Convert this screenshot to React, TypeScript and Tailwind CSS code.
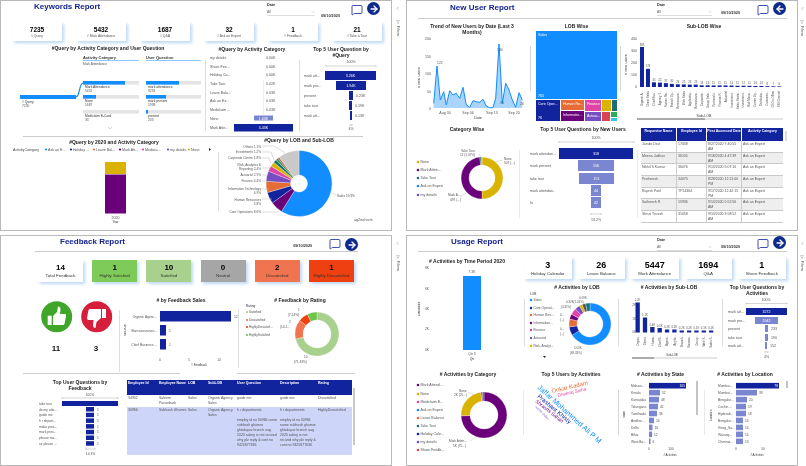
import type { ReactNode } from "react"
import { ArrowLeft, ArrowRight, ChevronDown, ChevronLeft, Filter, MessageSquare } from "lucide-react"

const BLUE = "#118dff"
const NAVY = "#12239e"
const ORANGE = "#e66c37"
const PURPLE = "#6b007b"
const PINK = "#e044a7"
const VIOLET = "#744ec2"
const GOLD = "#d9b300"
const TEAL = "#1a6e78"
const RED = "#d64550"
const SOFT = "#7b86d0"

function T({ x, y, s = 3.6, c = "#555", b = false, a = "start", r, children }: { x: number; y: number; s?: number; c?: string; b?: boolean; a?: "start" | "middle" | "end"; r?: number; children: ReactNode }) {
  return (
    <text x={x} y={y} fontSize={s} fill={c} fontWeight={b ? 700 : 400} textAnchor={a} transform={r !== undefined ? `rotate(${r} ${x} ${y})` : undefined}>
      {children}
    </text>
  )
}

function B({ x, y, x2, y2, c }: { x: number; y: number; x2: number; y2: number; c: string }) {
  return <rect x={x} y={y} width={x2 - x} height={y2 - y} fill={c} />
}

function L({ d, c = "#bbb", w = 0.5 }: { d: string; c?: string; w?: number }) {
  return <path d={d} stroke={c} strokeWidth={w} fill="none" />
}

function arc(cx: number, cy: number, r: number, ri: number, a0: number, a1: number) {
  const p = (rad: number, deg: number) => {
    const t = (deg * Math.PI) / 180
    return `${(cx + rad * Math.sin(t)).toFixed(2)} ${(cy - rad * Math.cos(t)).toFixed(2)}`
  }
  const big = a1 - a0 > 180 ? 1 : 0
  return `M${p(r, a0)} A${r} ${r} 0 ${big} 1 ${p(r, a1)} L${p(ri, a1)} A${ri} ${ri} 0 ${big} 0 ${p(ri, a0)} Z`
}

function Donut({ cx, cy, r, ri, slices }: { cx: number; cy: number; r: number; ri: number; slices: [number, string][] }) {
  let at = 0
  return (
    <g>
      {slices.map(([deg, col], i) => {
        const start = at
        at += deg
        return <path key={i} d={arc(cx, cy, r, ri, start, at)} fill={col} stroke="#fff" strokeWidth={0.3} />
      })}
    </g>
  )
}

// the viewBox takes page coordinates, the numbers below were read off the screenshot
function Plot({ x, y, w, h, children }: { x: number; y: number; w: number; h: number; children?: ReactNode }) {
  return (
    <svg className="block" width={w} height={h} viewBox={`${x} ${y} ${w} ${h}`}>
      {children}
    </svg>
  )
}

function Title({ className = "", children }: { className?: string; children: ReactNode }) {
  return <div className={`text-center text-[5px] font-bold leading-[6px] text-[#222] ${className}`}>{children}</div>
}

function Kpi({ n, l, className, numClass, labelClass }: { n: string; l: string; className: string; numClass: string; labelClass: string }) {
  return (
    <div className={`flex flex-col items-center justify-center shadow-[2px_2px_3px_#bcd8f5] ${className}`}>
      <div className={`font-bold text-black ${numClass}`}>{n}</div>
      <div className={labelClass}>{l}</div>
    </div>
  )
}

function Slicer({ className }: { className: string }) {
  return (
    <div className={className}>
      <div className="pt-[3px] text-[3.8px] font-bold leading-[4px] text-[#333]">Date</div>
      <div className="mt-[3px] flex items-center justify-between border-b border-[#ddd] pb-[1px] text-[3.5px] leading-[4px] text-[#666]">
        All
        <ChevronDown size={4} color="#888" />
      </div>
    </div>
  )
}

function Chat({ className }: { className: string }) {
  return <MessageSquare size={12} color={NAVY} strokeWidth={1.6} className={className} />
}

function GoButton({ back = false, className }: { back?: boolean; className: string }) {
  return (
    <div className={`flex h-[13px] w-[13px] shrink-0 items-center justify-center rounded-full bg-[#0f2a8c] ${className}`}>
      {back ? <ArrowLeft size={10} color="#fff" strokeWidth={3.2} /> : <ArrowRight size={10} color="#fff" strokeWidth={3.2} />}
    </div>
  )
}

function ReportTitle({ className, children }: { className: string; children: ReactNode }) {
  return <div className={`text-[8px] font-bold leading-[8px] text-[#14248f] ${className}`}>{children}</div>
}

function DateText({ className }: { className: string }) {
  return <div className={`text-[3.8px] font-bold leading-[4px] text-[#333] ${className}`}>09/10/2020</div>
}

function FiltersStrip() {
  return (
    <div className="flex flex-1 flex-col items-center pt-[6px]">
      <ChevronLeft size={5} color="#777" />
      <Filter size={4} color="#777" className="mt-[9px]" />
      <div className="mt-[2px] text-[3.6px] leading-[4px] text-[#444] [writing-mode:vertical-rl]">Filters</div>
    </div>
  )
}

function Panel({ className, children }: { className: string; children: ReactNode }) {
  return <div className={`h-[231px] w-[392px] bg-white shadow-[inset_0_0_0_1px_#b8b8b8] ${className}`}>{children}</div>
}

function VLine({ className }: { className: string }) {
  return <div className={`w-px shrink-0 bg-[#d4d4d4] ${className}`} />
}

function KeywordsTree() {
  return (
    <Plot x={15} y={53} w={186} h={83}>
      <T x={83} y={58.5} s={4} c="#333" b>Activity Category</T>
      <B x={83} y={60} x2={139} y2={60.5} c={BLUE} />
      <T x={146} y={58.5} s={4} c="#333" b>User Question</T>
      <B x={146} y={60} x2={202} y2={60.5} c={BLUE} />
      <T x={83} y={64.5} s={3.2}>Mark Attendance</T>
      <B x={20} y={95} x2={76} y2={99} c={BLUE} />
      <T x={22} y={103} s={3.3} c="#333"># Query</T>
      <T x={22} y={106.5} s={3.3}>7235</T>
      <L d="M76 97 C80 97 79 83 83 83" c={BLUE} w={1.2} />
      {[
        [81, 125, "Mark Attendance", "5432"],
        [95, 96, "None", "1687"],
        [110, 83, "Mediclaim E-Card", "33"],
      ].map(([y, fill, l, v]) => (
        <g key={String(l)}>
          <B x={83} y={Number(y)} x2={139} y2={Number(y) + 3.6} c="#e4e4e4" />
          <B x={83} y={Number(y)} x2={Number(fill)} y2={Number(y) + 3.6} c={BLUE} />
          <T x={85} y={Number(y) + 7} s={3.3} c="#333">{l}</T>
          <T x={85} y={Number(y) + 10.5} s={3.3}>{v}</T>
        </g>
      ))}
      {[
        [81, 179, "mark attendance", "3291"],
        [95, 166, "mark present", "1938"],
        [110, 148, "present", "233"],
      ].map(([y, fill, l, v]) => (
        <g key={String(l)}>
          <B x={146} y={Number(y)} x2={202} y2={Number(y) + 3.6} c="#e4e4e4" />
          <B x={146} y={Number(y)} x2={Number(fill)} y2={Number(y) + 3.6} c={BLUE} />
          <T x={148} y={Number(y) + 7} s={3.3} c="#333">{l}</T>
          <T x={148} y={Number(y) + 10.5} s={3.3}>{v}</T>
        </g>
      ))}
      <L d="M108 127 L110 129 L112 127" c="#aaa" />
    </Plot>
  )
}

function KeywordsBars() {
  const rows: [string, string, number][] = [
    ["my details", "0.00K", 59],
    ["Share Fee...", "0.00K", 67.5],
    ["Holiday Ca...", "0.00K", 76],
    ["Take Tour", "0.02K", 85],
    ["Leave Bala...", "0.03K", 93.5],
    ["Ask an Ex...", "0.03K", 102],
    ["Mediclaim ...", "0.03K", 111],
  ]
  return (
    <Plot x={205} y={53} w={94} h={83}>
      <L d="M205.5 60 V131" />
      <L d="M263.5 80 V115" c="#ddd" />
      {rows.map(([l, v, y]) => (
        <g key={l}>
          <T x={210} y={y}>{l}</T>
          <T x={266} y={y}>{v}</T>
        </g>
      ))}
      <T x={210} y={120}>None</T>
      <B x={254} y={115.5} x2={273} y2={120.5} c={SOFT} />
      <T x={263.5} y={119.5} a="middle" c="#fff">1.63K</T>
      <T x={210} y={129}>Mark Atte...</T>
      <B x={234} y={124} x2={293} y2={131.5} c={NAVY} />
      <T x={263.5} y={129} a="middle" c="#fff">5.43K</T>
    </Plot>
  )
}

function Funnel({ rows, bar, top, bottom, labelX, inside = true, size = 3.6 }: { rows: [string, string, number, number, number, number, string][]; bar: [number, number, number]; top: [string, number, number]; bottom: [string, number, number, number, number]; labelX: number; inside?: boolean; size?: number }) {
  return (
    <g>
      <T x={top[1]} y={top[2]} a="middle" s={size}>{top[0]}</T>
      <L d={`M${bar[0]} ${bar[2] - 1} V${bar[2] + 1} M${bar[0]} ${bar[2]} H${bar[1]} M${bar[1]} ${bar[2] - 1} V${bar[2] + 1}`} c="#aaa" />
      {rows.map(([l, v, x, x2, y, y2, c]) => {
        const wide = x2 - x > 12
        return (
          <g key={l + y}>
            <T x={labelX} y={(y + y2) / 2 + 1.3} s={size}>{l}</T>
            <B x={x} y={y} x2={x2} y2={y2} c={c} />
            {wide || inside ? (
              <T x={(x + x2) / 2} y={(y + y2) / 2 + 1.3} a="middle" s={size} c="#fff">{v}</T>
            ) : (
              <T x={x2 + 3} y={(y + y2) / 2 + 1.3} s={size}>{v}</T>
            )}
          </g>
        )
      })}
      <L d={`M${bottom[1]} ${bottom[3] - 1} V${bottom[3] + 1} M${bottom[1]} ${bottom[3]} H${bottom[2]} M${bottom[2]} ${bottom[3] - 1} V${bottom[3] + 1}`} c="#aaa" />
      <T x={(bottom[1] + bottom[2]) / 2} y={bottom[4]} a="middle" s={size}>{bottom[0]}</T>
    </g>
  )
}

function KeywordsReport() {
  const cards = [
    ["7235", "# Query"],
    ["5432", "# Mark Attendance"],
    ["1687", "# Q&A"],
    ["32", "# Ask an Expert"],
    ["1", "# Feedback"],
    ["21", "# Take a Tour"],
  ]
  const legend: [string, string, number][] = [
    ["Ask an E...", BLUE, 46],
    ["Holiday ...", NAVY, 71],
    ["Leave Bal...", ORANGE, 94],
    ["Mark Att...", PURPLE, 120],
    ["Medicia...", PINK, 143],
    ["my details", VIOLET, 168],
    ["None", GOLD, 189],
  ]
  return (
    <Panel className="">
      <div className="flex h-[22px]">
        <ReportTitle className="ml-[34px] mt-[3px] w-[233px]">Keywords Report</ReportTitle>
        <Slicer className="w-[48px]" />
        <DateText className="ml-[6px] mt-[14px] w-[24px]" />
        <Chat className="ml-[6px] mt-[4px]" />
        <GoButton className="ml-[4px] mt-[2px]" />
      </div>
      <div className="flex h-[23px] gap-[14px] pl-[12px]">
        {cards.map(([n, l]) => (
          <Kpi key={l} n={n} l={l} className="h-[19px] w-[50px] bg-white" numClass="text-[6.5px] leading-[9px]" labelClass="text-[3.4px] leading-[5px] text-[#555]" />
        ))}
      </div>
      <div className="flex h-[91px] pl-[15px]">
        <div className="w-[186px]">
          <Title className="h-[8px]">#Query by Activity Category and User Question</Title>
          <KeywordsTree />
        </div>
        <div className="ml-[4px] w-[94px]">
          <Title className="h-[8px] pt-[1px]">#Query by Activity Category</Title>
          <KeywordsBars />
        </div>
        <div className="w-[84px]">
          <Title className="h-[13px] pt-[1px]">Top 5 User Question by<br />#Query</Title>
          <Plot x={299} y={58} w={84} h={78}>
            <L d="M299.5 60 V131" />
            <Funnel
              labelX={304}
              top={["100%", 351, 62.5]}
              bar={[326, 376, 66]}
              bottom={["4%", 350, 352, 125, 130]}
              inside={false}
              rows={[
                ["mark att...", "3.26K", 325, 376, 71, 80, NAVY],
                ["mark pre...", "1.94K", 336, 366, 81, 90, NAVY],
                ["present", "0.23K", 349, 353, 91, 100, NAVY],
                ["take tour", "0.19K", 349, 352, 101, 110, NAVY],
                ["mark att...", "0.13K", 350, 352, 111, 120, NAVY],
              ]}
            />
          </Plot>
        </div>
      </div>
      <div className="ml-[23px] h-px w-[340px] bg-[#ccc]" />
      <div className="flex pl-[10px]">
        <div className="w-[208px]">
          <Title className="h-[9px] pt-[2px]">#Query by 2020 and Activity Category</Title>
          <Plot x={10} y={146} w={208} h={83}>
            <T x={13} y={150.5} c="#444">ActivityCategory</T>
            {legend.map(([l, c, x]) => (
              <g key={l}>
                <circle cx={x} cy={149.5} r={1.1} fill={c} />
                <T x={x + 2} y={150.5}>{l}</T>
              </g>
            ))}
            <path d="M209 148 L211 149.5 L209 151 Z" fill="#222" />
            <B x={105} y={162} x2={126} y2={174} c={GOLD} />
            <B x={105} y={174.5} x2={126} y2={213.5} c={PURPLE} />
            <T x={115.5} y={219} a="middle">2020</T>
            <T x={115.5} y={223} a="middle" s={3} c="#333">Year</T>
          </Plot>
        </div>
        <div className="w-[162px]">
          <Title className="h-[5px] leading-[5px]">#Query by LOB and Sub-LOB</Title>
          <Plot x={219} y={142} w={162} h={87}>
            <L d="M219.5 152 V211" />
            <Donut cx={300} cy={183.5} r={33} ri={8.5} slices={[[212, BLUE], [22, PURPLE], [20, NAVY], [20, ORANGE], [18, VIOLET], [10, PINK], [8, GOLD], [6, TEAL], [4, "#2f9e44"], [3, RED], [37, "#c9c9c9"]]} />
            {[
              ["Others 1.1%", 147.5, "M263 146 H275 L286 153"],
              ["Investments 1.2%", 153, "M263 152 H272 L275 160"],
              ["Corporate Centre 1.8%", 159, "M263 158 H270 L272 163"],
              ["Reporting 2.4%", 170, "M263 168 H268 L270 167"],
              ["Actuarial 2.9%", 176, "M263 175 H269"],
              ["Finance 4.4%", 182, "M263 181 H268"],
              ["4.9%", 194, "M263 189 H270"],
              ["5.8%", 205, "M263 199 H273"],
              ["Core Operations 8.6%", 213, "M263 212 H280"],
            ].map(([l, y, d]) => (
              <g key={String(l)}>
                <L d={String(d)} />
                <T x={262} y={Number(y)} a="end" s={3.2}>{l}</T>
              </g>
            ))}
            <T x={262} y={166} a="end" s={3.2}>Risk, Analytics &amp;</T>
            <T x={262} y={189.5} a="end" s={3.2}>Information Technology</T>
            <T x={262} y={200.5} a="end" s={3.2}>Human Resources</T>
            <L d="M331 192 L337 195" />
            <T x={338} y={196.5} s={3.2}>Sales 59.3%</T>
            <T x={355} y={220.5} s={3.6}>ag2incharts</T>
          </Plot>
        </div>
      </div>
    </Panel>
  )
}

const TREND: [number, number][] = [[92, 310], [102, 198], [112, 300], [122, 275], [130, 315], [140, 272], [150, 285], [160, 280], [170, 295], [180, 262], [190, 315], [200, 322], [210, 302], [220, 305], [230, 307], [240, 298], [250, 318], [260, 323], [270, 323], [278, 295], [288, 132], [298, 310], [308, 250], [318, 270], [328, 300], [338, 322], [348, 278], [358, 300]]

const SUB_LOB: [string, number][] = [["Organic A...", 383], ["Direct Sales", 174], ["Chief Bus...", 45], ["Agency T...", 42], ["Human Re...", 37], ["Branch Op...", 30], ["Bancassura...", 26], ["Web Sales", 25], ["Applicatio...", 23], ["Bancassura...", 23], ["Corporate...", 16], ["Group Sale...", 16], ["Partnershi...", 15], ["Finance R...", 15], ["Actuarial", 15], ["Investment...", 14], ["Sales Strate...", 12], ["Investment...", 12], ["Risk Mana...", 11], ["Carrier Op...", 10], ["Distributio...", 10], ["Customer...", 8], ["CEO's Office", 7], ["EM Channel", 6]]

const NEW_USERS = [
  ["Janubi Devi", "17038", "8/27/2020 7:40:55 AM"],
  ["Meena Jadhav", "36105", "9/18/2020 4:47:39 AM"],
  ["Nikhil S Kumar", "36076", "9/13/2020 5:07:16 AM"],
  ["Pratheesh", "34070", "8/28/2020 12:21:00 PM"],
  ["Rajesh Patil", "TP14364", "9/17/2020 12:42:15 PM"],
  ["Satheesh R", "15936", "9/14/2020 5:52:56 AM"],
  ["Shruti Trivedi", "31058", "9/10/2020 3:58:52 AM"],
]

function NewUserTable() {
  return (
    <div className="ml-[1px] mt-[6px] flex w-[148px]">
      <div className="w-[142px] text-[3.5px] leading-[5px] text-[#555]">
        <div className="grid h-[13px] grid-cols-[36px_30px_35px_41px] bg-[#12239e] text-center font-bold leading-[5px] text-white">
          <div className="border-r border-white pt-[1px]">Requestor Name</div>
          <div className="border-r border-white pt-[1px]">Employee Id</div>
          <div className="border-r border-white pt-[1px]">First Accessed Date</div>
          <div className="pt-[1px]">Activity Category</div>
        </div>
        {NEW_USERS.map(([name, id, date], i) => (
          <div key={name} className={`grid h-[11.7px] grid-cols-[36px_30px_35px_41px] overflow-hidden border-b border-[#c8c8c8] ${i % 2 ? "bg-[#eeeeee]" : "bg-white"}`}>
            <div className="border-r border-[#ccc] pl-[1px] pt-[1px]">{name}</div>
            <div className="border-r border-[#ccc] pl-[1px] pt-[1px]">{id}</div>
            <div className="border-r border-[#ccc] pl-[1px] pt-[1px]">{date}</div>
            <div className="pl-[1px] pt-[1px]">Ask an Expert</div>
          </div>
        ))}
      </div>
      <div className="ml-[2px] mt-[3px] h-[10px] w-[2px] bg-[#ddd]" />
    </div>
  )
}

function NewUserReport() {
  const pts = TREND.map(([x, y]) => `${(403 + x / 3).toFixed(1)} ${(y / 3).toFixed(1)}`)
  return (
    <Panel className="ml-[3px]">
      <div className="ml-[12px] flex h-[19px] w-[369px] border-b border-[#ccc]">
        <ReportTitle className="ml-[32px] mt-[4px] w-[207px]">New User Report</ReportTitle>
        <Slicer className="w-[55px]" />
        <DateText className="ml-[9px] mt-[11px] w-[24px]" />
        <Chat className="ml-[12px] mt-[4px]" />
        <GoButton back className="ml-[4px] mt-[2px]" />
      </div>
      <div className="flex h-[103px] pl-[12px]">
        <div className="w-[108px]">
          <Title className="h-[17px] pt-[4px]">Trend of New Users by Date (Last 3<br />Months)</Title>
          <Plot x={418} y={36} w={108} h={86}>
            {[["200", 40], ["150", 57.5], ["100", 75], ["50", 92.5], ["0", 110]].map(([l, y]) => (
              <T key={l} x={431} y={Number(y)} a="end">{l}</T>
            ))}
            <T x={420} y={88} r={-90} c="#333"># New Users</T>
            <path d={`M${pts.join(" L")} L522.3 108 L433.7 108 Z`} fill="#a9d5fc" />
            <path d={`M${pts.join(" L")}`} fill="none" stroke={BLUE} strokeWidth={1} />
            <T x={437} y={63.5} s={3.4}>122</T>
            <T x={497} y={51} s={3.4}>184</T>
            <T x={500} y={104} s={3.4}>30</T>
            <T x={520} y={105} s={3.4}>26</T>
            {[["Aug 30", 445], ["Sep 06", 468], ["Sep 13", 492], ["Sep 20", 514]].map(([l, x]) => (
              <T key={l} x={Number(x)} y={114} a="middle">{l}</T>
            ))}
            <T x={478} y={119} a="middle" c="#333">Date</T>
          </Plot>
        </div>
        <VLine className="ml-[4px] mr-[5px] mt-[27px] h-[45px]" />
        <div className="w-[81px]">
          <Title className="h-[12px] pt-[4px]">LOB Wise</Title>
          <Plot x={536} y={31} w={81} h={91}>
            <B x={536} y={31} x2={617} y2={99} c={BLUE} />
            <T x={538} y={36} c="#fff">Sales</T>
            <T x={538} y={97} c="#fff">765</T>
            <B x={536} y={100} x2={560} y2={121} c={NAVY} />
            <T x={538} y={105} c="#fff">Core Oper...</T>
            <T x={538} y={119} c="#fff">76</T>
            <B x={561} y={100} x2={584} y2={110} c={ORANGE} />
            <T x={563} y={105} c="#fff">Human Re...</T>
            <B x={561} y={111} x2={584} y2={121} c={PURPLE} />
            <T x={563} y={116} c="#fff">Informatio...</T>
            <B x={585} y={100} x2={601} y2={111} c={PINK} />
            <T x={587} y={105} c="#fff">Finance</T>
            <B x={585} y={112} x2={601} y2={121} c={VIOLET} />
            <T x={587} y={117} c="#fff">Actuar...</T>
            <B x={602} y={100} x2={611} y2={111} c={GOLD} />
            <B x={612} y={100} x2={617} y2={111} c={TEAL} />
            <B x={602} y={112} x2={610} y2={121} c={RED} />
            <B x={611} y={112} x2={617} y2={117} c="#2fae5a" />
            <B x={611} y={118} x2={617} y2={121} c="#33c5e8" />
          </Plot>
        </div>
        <VLine className="ml-[3px] mr-[4px] mt-[27px] h-[45px]" />
        <div className="w-[158px]">
          <Title className="h-[12px] pt-[4px]">Sub-LOB Wise</Title>
          <Plot x={625} y={31} w={158} h={91}>
            {[["400", 39.5], ["300", 51.5], ["200", 63.5], ["100", 75.5], ["0", 88]].map(([l, y]) => (
              <T key={l} x={637} y={Number(y)} a="end">{l}</T>
            ))}
            <T x={627} y={75} r={-90} c="#333"># New Users</T>
            {SUB_LOB.map(([l, v], i) => {
              const x = 640 + i * 5.97
              const h = (v * 40) / 383
              return (
                <g key={l + i}>
                  <B x={x} y={87 - h} x2={x + 4} y2={87} c={NAVY} />
                  <T x={x + 2} y={85.5 - h} a="middle" s={2.8}>{v}</T>
                  <T x={x + 3} y={91} a="end" r={-90} s={2.9}>{l}</T>
                </g>
              )
            })}
            <T x={704} y={116.5} a="middle" c="#333">Sub-LOB</T>
            <B x={637} y={118} x2={783} y2={120} c="#e5e5e5" />
            <B x={637} y={118} x2={705} y2={120} c="#aaa" />
          </Plot>
        </div>
      </div>
      <div className="flex pl-[5px]">
        <div className="w-[112px]">
          <Title className="h-[12px] pt-[4px]">Category Wise</Title>
          <Plot x={411} y={134} w={112} h={95}>
            {[["None", GOLD, 162], ["Mark Atten...", PURPLE, 170], ["Take Tour", TEAL, 178], ["Ask an Expert", BLUE, 186], ["my details", VIOLET, 195]].map(([l, c, y]) => (
              <g key={String(l)}>
                <circle cx={418} cy={Number(y)} r={1.3} fill={String(c)} />
                <T x={420.5} y={Number(y) + 1.3}>{l}</T>
              </g>
            ))}
            <Donut cx={482} cy={178} r={21} ri={13} slices={[[180, GOLD], [174, PURPLE], [4, TEAL], [2, BLUE]]} />
            <T x={461} y={151.5} s={3.2}>Take Tour</T>
            <T x={460} y={156} s={3.2}>11 (1.07%)</T>
            <T x={504} y={159.5} s={3.2}>None</T>
            <T x={504} y={164} s={3.2}>507 (...)</T>
            <T x={448} y={196} s={3.2}>Mark A...</T>
            <T x={450} y={201} s={3.2}>497 (...)</T>
            <L d="M479 154 L481 157 M503 160 L495 162 M460 197 L466 193" />
            <L d="M519.5 150 V218" c="#d4d4d4" />
          </Plot>
        </div>
        <div className="ml-[3px] w-[114px]">
          <Title className="h-[12px] pt-[4px]">Top 5 User Questions by New Users</Title>
          <Plot x={526} y={134} w={114} h={95}>
            <Funnel
              labelX={530}
              top={["100%", 596, 138.5]}
              bar={[559, 634, 142]}
              bottom={["13.2%", 591, 601, 214, 221]}
              rows={[
                ["mark attendan...", "318", 559, 633, 148, 159, NAVY],
                ["mark present", "156", 578, 614, 160, 171, SOFT],
                ["take tour", "151", 579, 614, 173, 184, SOFT],
                ["mark attendan..", "44", 591, 601, 185, 196, SOFT],
                ["hi", "42", 591, 601, 197, 208, SOFT],
              ]}
            />
            <L d="M637.5 150 V218" c="#d4d4d4" />
          </Plot>
        </div>
        <NewUserTable />
      </div>
    </Panel>
  )
}

function FeedbackBars() {
  return (
    <Plot x={124} y={304} w={114} h={69}>
      <T x={126} y={336} r={-90} s={2.8} c="#333">Sub-LOB</T>
      {[["Organic Agenc...", 311, 231, "12"], ["Bancassurance...", 325, 166, "1"], ["Chief Business ...", 339, 166, "1"]].map(([l, y, x2, v]) => (
        <g key={String(l)}>
          <T x={157} y={Number(y) + 6.5} a="end" s={3.3}>{l}</T>
          <B x={160} y={Number(y)} x2={Number(x2)} y2={Number(y) + 10.5} c={NAVY} />
          <T x={Number(x2) + 3} y={Number(y) + 6.5} s={3.3}>{v}</T>
        </g>
      ))}
      {[["0", 160], ["5", 189], ["10", 219]].map(([l, x]) => (
        <T key={l} x={Number(x)} y={361} a="middle" s={3.3}>{l}</T>
      ))}
      <T x={199} y={366} a="middle" s={3} c="#333"># Feedback</T>
    </Plot>
  )
}

function FeedbackTable() {
  const cols = "grid grid-cols-[31px_29px_20px_29px_43px_38px_35px]"
  const note = "employ id no 30966 name subhash ghumre ghtakopar branch aug 2020 salery is not recived why plz reply & cont no 9425877636"
  return (
    <div className="ml-[3px] mt-[6px] flex">
      <div className="w-[225px] text-[3.5px] leading-[5px] text-[#555]">
        <div className={`${cols} h-[15px] bg-[#12239e] font-bold text-white`}>
          <div className="pl-[1px] pt-[1px]">Employee Id</div>
          <div className="pl-[1px] pt-[1px]">Employee Name</div>
          <div className="pl-[1px] pt-[1px]">LOB</div>
          <div className="pl-[1px] pt-[1px]">SubLOB</div>
          <div className="pl-[1px] pt-[1px]">User Question</div>
          <div className="pl-[1px] pt-[1px]">Description</div>
          <div className="pl-[1px] pt-[1px]">Rating</div>
        </div>
        <div className={`${cols} h-[12px] bg-white`}>
          <div className="pl-[1px] pt-[1px]">34902</div>
          <div className="pl-[1px] pt-[1px]">Saleem Parambath</div>
          <div className="pl-[1px] pt-[1px]">Sales</div>
          <div className="pl-[1px] pt-[1px]">Organic Agency Sales</div>
          <div className="pl-[1px] pt-[1px]">guide me</div>
          <div className="pl-[1px] pt-[1px]">guide me</div>
          <div className="pl-[1px] pt-[1px]">Dissatisfied</div>
        </div>
        <div className={`${cols} h-[48px] bg-[#cdd5f9]`}>
          <div className="pl-[1px] pt-[1px]">30966</div>
          <div className="pl-[1px] pt-[1px]">Subhash Ghumre</div>
          <div className="pl-[1px] pt-[1px]">Sales</div>
          <div className="pl-[1px] pt-[1px]">Organic Agency Sales</div>
          <div className="pl-[1px] pt-[1px]">
            <div className="mb-[5px]">h r departments</div>
            {note}
          </div>
          <div className="pl-[1px] pt-[1px]">
            <div className="mb-[5px]">h r departments</div>
            {note}
          </div>
          <div className="pl-[1px] pt-[1px]">HighlyDissatisfied</div>
        </div>
      </div>
      <div className="ml-[1px] mt-[8px] h-[57px] w-[2px] bg-[#c8c8c8]" />
    </div>
  )
}

function FeedbackReport() {
  const label = "text-[4.4px] leading-[6px] text-[#333]"
  const num = "text-[8px] leading-[10px]"
  return (
    <Panel className="">
      <div className="ml-[35px] flex h-[17px] w-[323px] border-b border-[#ccc]">
        <ReportTitle className="ml-[25px] mt-[3px] w-[234px]">Feedback Report</ReportTitle>
        <DateText className="mt-[9px] w-[24px]" />
        <Chat className="ml-[12px] mt-[3px]" />
        <GoButton className="ml-[4px] mt-[3px]" />
      </div>
      <div className="ml-[38px] mt-[8px] flex gap-[9.2px]">
        <Kpi n="14" l="Total Feedback" className="h-[22px] w-[45px] bg-white" numClass={num} labelClass={label} />
        <Kpi n="1" l="Highly Satisfied" className="h-[22px] w-[45px] bg-[#7ecb59]" numClass={num} labelClass={label} />
        <Kpi n="10" l="Satisfied" className="h-[22px] w-[45px] bg-[#a9d18e]" numClass={num} labelClass={label} />
        <Kpi n="0" l="Neutral" className="h-[22px] w-[45px] bg-[#a6a6a6]" numClass={num} labelClass={label} />
        <Kpi n="2" l="Dissatisfied" className="h-[22px] w-[45px] bg-[#f0744f]" numClass={num} labelClass={label} />
        <Kpi n="1" l="Highly Dissatisfied" className="h-[22px] w-[45px] bg-[#ee4010]" numClass={num} labelClass={label} />
      </div>
      <div className="mt-[3px] flex h-[88px] pl-[30px]">
        <Plot x={30} y={285} w={94} h={88}>
          <circle cx={56.7} cy={316.7} r={15.5} fill="#3fa62a" />
          <rect x={47.7} y={315.7} width={4} height={9.3} fill="#fff" />
          <path d="M53 316 L57 312 L58 306.5 Q60.5 306.5 60.5 309.5 L60 314 L65 314 Q66.5 314 66 316 L64.5 324 Q64 325 63 325 L53 325 Z" fill="#fff" />
          <circle cx={96.7} cy={316.7} r={15.5} fill="#d61f3a" />
          <rect x={102} y={309} width={4} height={9} fill="#fff" />
          <path d="M101 309 L90 309 Q89 309 88.5 310 L87 318 Q87 320 88.5 320 L93.5 320 L93 325 Q93 328 95.5 328 L96.5 322 L101 318 Z" fill="#fff" />
          <T x={56} y={351} a="middle" s={8} c="#111" b>11</T>
          <T x={96} y={351} a="middle" s={8} c="#111" b>3</T>
          <L d="M119.5 310 V372" />
        </Plot>
        <div className="w-[114px]">
          <Title className="h-[19px] pt-[12px]"># by Feedback Sales</Title>
          <FeedbackBars />
        </div>
        <div className="w-[124px]">
          <Title className="h-[19px] pt-[12px]"># Feedback by Rating</Title>
          <Plot x={238} y={304} w={124} h={69}>
            <L d="M238.5 310 V368" />
            <T x={246} y={306.5} s={3.2} c="#333">Rating</T>
            {[["Satisfied", "#a9d18e", 312], ["Dissatisfied", "#f0744f", 320], ["HighlyDissatisf...", "#ee4010", 327], ["HighlySatisfied", "#6fc44c", 335]].map(([l, c, y]) => (
              <g key={String(l)}>
                <circle cx={247} cy={Number(y)} r={1.1} fill={String(c)} />
                <T x={249} y={Number(y) + 1.2} s={3.2}>{l}</T>
              </g>
            ))}
            <Donut cx={317} cy={334} r={22} ri={14} slices={[[257, "#a9d18e"], [51, "#f0744f"], [26, "#ee4010"], [26, "#6fc44c"]]} />
            <T x={298} y={311} s={3.2}>1</T>
            <T x={288} y={316} s={3.2}>(7.14%)</T>
            <T x={289} y={323} s={3.2}>2</T>
            <T x={280} y={328} s={3.2}>(14.2...</T>
            <T x={304} y={358} s={3.2}>10</T>
            <T x={294} y={363} s={3.2}>(71.43%)</T>
          </Plot>
        </div>
      </div>
      <div className="ml-[23px] flex">
        <div className="h-px w-[157px] bg-[#ccc]" />
        <div className="ml-[57px] h-px w-[118px] bg-[#ccc]" />
      </div>
      <div className="flex pl-[36px]">
        <div className="w-[88px]">
          <Title className="h-[18px] pt-[5px]">Top User Questions by<br />Feedback</Title>
          <Plot x={36} y={392} w={88} h={66}>
            <Funnel
              labelX={39}
              top={["100%", 90, 395.5]}
              bar={[62, 118, 398]}
              bottom={["14.3%", 86, 95, 449, 454.5]}
              inside={false}
              size={3.3}
              rows={[
                ["take tour", "", 62, 118, 401, 406, NAVY],
                ["do my atte...", "1", 86, 94, 407, 411.5, NAVY],
                ["guide me", "1", 86, 94, 412.7, 417.2, NAVY],
                ["h r depart...", "1", 86, 94, 418.4, 422.9, NAVY],
                ["make pres...", "1", 86, 94, 424.1, 428.6, NAVY],
                ["mark pres...", "1", 86, 94, 429.8, 434.3, NAVY],
                ["please ma...", "1", 86, 94, 435.5, 440, NAVY],
                ["sir please ...", "1", 86, 94, 441.2, 445.7, NAVY],
              ]}
            />
          </Plot>
        </div>
        <FeedbackTable />
      </div>
    </Panel>
  )
}

function BarList({ x, axis, rows, labelX, color = SOFT }: { x: number; axis: [string, number][]; rows: [string, string, number][]; labelX: number; color?: string }) {
  return (
    <g>
      {rows.map(([l, v, x2], i) => {
        const y = 385.7 + i * 6.95
        const fill = i === 0 ? NAVY : color
        return (
          <g key={l + i}>
            <T x={labelX} y={y + 1.3} s={3.3}>{l}</T>
            <B x={x} y={y - 2.8} x2={x2} y2={y + 2.8} c={fill} />
            {i === 0 ? <T x={x2 - 1} y={y + 1.3} s={3.3} a="end" c="#fff">{v}</T> : <T x={x2 + 2} y={y + 1.3} s={3.3}>{v}</T>}
          </g>
        )
      })}
      {axis.map(([l, ax]) => (
        <T key={l} x={ax} y={450} a="middle" s={3.3}>{l}</T>
      ))}
    </g>
  )
}

function UsageReport() {
  const num = "text-[9px] leading-[11px]"
  const label = "text-[4.4px] leading-[6px] text-[#333]"
  const bars: [string, string, number][] = [["Organ...", "2.2K", 30], ["Direct...", "1.1K", 15], ["Huma...", "0.4K", 5.5], ["Chief B...", "0.3K", 4.5], ["Agenc...", "0.2K", 3], ["Applic...", "0.2K", 3], ["Branch...", "0.2K", 2], ["Bancas...", "0.2K", 2], ["Group...", "0.1K", 2], ["Web S...", "0.1K", 2], ["Sales S...", "0.1K", 2]]
  return (
    <Panel className="ml-[3px]">
      <div className="ml-[12px] flex h-[17px] w-[369px] border-b border-[#ccc]">
        <ReportTitle className="ml-[33px] mt-[3px] w-[206px]">Usage Report</ReportTitle>
        <Slicer className="w-[55px]" />
        <DateText className="ml-[9px] mt-[10px] w-[24px]" />
        <Chat className="ml-[12px] mt-[3px]" />
        <GoButton className="ml-[4px] mt-[1px]" />
      </div>
      <div className="flex h-[110px] pl-[12px]">
        <div className="w-[98px]">
          <Title className="h-[14px] pt-[6px]"># Activities by Time Period 2020</Title>
          <Plot x={418} y={266} w={98} h={96}>
            {[["8K", 269], ["6K", 290], ["4K", 310], ["2K", 330], ["0K", 351]].map(([l, y]) => (
              <T key={l} x={425} y={Number(y)} s={3.3}>{l}</T>
            ))}
            <T x={420} y={316} r={-90} s={3} c="#333"># Activities</T>
            <B x={463} y={276} x2={481} y2={350} c={BLUE} />
            <T x={472} y={273} a="middle" s={3.3}>7.3K</T>
            <T x={472} y={355} a="middle" s={3.3}>Qtr 3</T>
            <T x={472} y={360} a="middle" s={3.3} c="#333">Qtr</T>
          </Plot>
        </div>
        <div className="ml-[8px] w-[267px]">
          <div className="mt-[5px] flex gap-[6px]">
            {[["3", "Holiday Calendar"], ["26", "Leave Balance"], ["5447", "Mark Attendance"], ["1694", "Q&A"], ["1", "Share Feedback"]].map(([n, l]) => (
              <Kpi key={l} n={n} l={l} className="h-[22px] w-[47.5px] bg-white" numClass={num} labelClass={label} />
            ))}
          </div>
          <div className="mt-[2px] flex">
            <div className="w-[106px]">
              <Title className="h-[11px] pt-[3px]"># Activities by LOB</Title>
              <Plot x={524} y={293} w={106} h={69}>
                <L d="M524.5 300 V347 M618.5 300 V347" />
                <T x={530} y={295.5} s={3.2} c="#333">LOB</T>
                {[["Sales", BLUE, 301], ["Core Operat...", NAVY, 309], ["Human Res...", ORANGE, 316], ["Information...", PURPLE, 324], ["Finance", PINK, 331], ["Actuarial", VIOLET, 339], ["Risk, Analyt...", GOLD, 347]].map(([l, c, y]) => (
                  <g key={String(l)}>
                    <circle cx={531} cy={Number(y)} r={1.2} fill={String(c)} />
                    <T x={533.5} y={Number(y) + 1.2} s={3.3}>{l}</T>
                  </g>
                ))}
                <Donut cx={590} cy={325} r={21} ri={13} slices={[[238, BLUE], [24, NAVY], [22, ORANGE], [14, PURPLE], [18, PINK], [14, VIOLET], [8, GOLD], [10, "#555"], [12, TEAL]]} />
                <T x={579} y={299.5} s={2.9}>0.09K</T>
                <T x={566} y={304} s={2.9}>0.32K(1.24%)</T>
                <T x={561} y={308.5} s={2.9}>(4.31%)</T>
                <T x={560} y={317} s={2.9}>0...</T>
                <T x={560} y={322} s={2.9}>(...)</T>
                <T x={560} y={331} s={2.9}>0...</T>
                <T x={560} y={336} s={2.9}>(...)</T>
                <T x={574} y={349.5} s={2.9}>5.03K</T>
                <T x={570} y={354.5} s={2.9}>(69.33%)</T>
                <path d="M543 357 H546 L544.5 359 Z" fill="#222" />
              </Plot>
            </div>
            <div className="w-[92px]">
              <Title className="h-[11px] pr-[14px] pt-[3px]"># Activities by Sub-LOB</Title>
              <Plot x={630} y={293} w={92} h={69}>
                {[["2K", 307], ["1K", 321], ["0K", 334]].map(([l, y]) => (
                  <T key={l} x={636} y={Number(y)} a="end" s={3}>{l}</T>
                ))}
                {bars.map(([l, v, h], i) => {
                  const x = 635 + i * 7.35
                  return (
                    <g key={l}>
                      <B x={x + 0.5} y={333.5 - h} x2={x + 4.8} y2={333.5} c={NAVY} />
                      <T x={x + 2.6} y={332 - h} a="middle" s={2.8}>{v}</T>
                      <T x={x + 3.8} y={336} a="end" r={-90} s={3}>{l}</T>
                    </g>
                  )
                })}
                <T x={672} y={356.5} a="middle" s={2.8} c="#333">Sub-LOB</T>
                <B x={632} y={358} x2={717} y2={360} c="#e5e5e5" />
                <B x={632} y={358} x2={654} y2={360} c="#aaa" />
              </Plot>
            </div>
            <div className="w-[67px]">
              <Title className="h-[16px] pl-[3px] pt-[3px]">Top User Questions by Activities</Title>
              <Plot x={722} y={298} w={67} h={64}>
                <L d="M722.5 300 V347" />
                <Funnel
                  labelX={728}
                  top={["100%", 766, 302]}
                  bar={[746, 787, 304.5]}
                  bottom={["4%", 765, 768, 353, 358.5]}
                  inside={false}
                  rows={[
                    ["mark att...", "3272", 746, 787, 309, 316, NAVY],
                    ["mark pre...", "1942", 755, 778, 318, 325, SOFT],
                    ["present", "233", 765, 768, 326, 333, SOFT],
                    ["take tour", "190", 765, 768, 335, 342, SOFT],
                    ["mark att...", "152", 765, 767, 343, 350, SOFT],
                  ]}
                />
              </Plot>
            </div>
          </div>
        </div>
      </div>
      <div className="flex pl-[5px]">
        <div className="w-[114px]">
          <Title className="h-[16px] pt-[9px]"># Activities by Category</Title>
          <Plot x={411} y={378} w={114} h={87}>
            {[["Mark Attend...", PURPLE, 385], ["None", GOLD, 394], ["Mediclaim E...", PINK, 402], ["Ask an Expert", BLUE, 410], ["Leave Balance", ORANGE, 418], ["Take Tour", TEAL, 426], ["Holiday Cale...", NAVY, 434], ["my details", VIOLET, 442], ["Share Feedb...", RED, 450]].map(([l, c, y]) => (
              <g key={String(l)}>
                <circle cx={418} cy={Number(y)} r={1.3} fill={String(c)} />
                <T x={420.5} y={Number(y) + 1.3}>{l}</T>
              </g>
            ))}
            <Donut cx={484} cy={415} r={23} ri={14} slices={[[268, PURPLE], [84, GOLD], [4, VIOLET], [4, "#555"]]} />
            <T x={459} y={391.5} s={3.2}>None</T>
            <T x={454} y={396} s={3.2}>2K (25...)</T>
            <T x={449} y={442} s={3.2}>Mark Atten...</T>
            <T x={453} y={447} s={3.2}>5K (75...)</T>
            <L d="M468 392 L474 395 M470 441 L476 437" />
            <L d="M523.5 390 V435" c="#d4d4d4" />
          </Plot>
        </div>
        <div className="ml-[1px] w-[90px]">
          <Title className="h-[16px] pt-[9px]">Top 5 Users by Activities</Title>
          <Plot x={526} y={378} w={90} h={87}>
            <T x={537} y={388} s={7.3} c={BLUE} r={42}>Jaffar Mohammed Ali P M</T>
            <T x={552} y={393} s={6} c={ORANGE} r={-13}>Onkar Kadam</T>
            <T x={558} y={397} s={4.6} c={PINK} r={-13}>Dheeraj Sinha</T>
            <T x={537} y={397} s={6} c={NAVY} r={40}>Prashant Khisty</T>
            <T x={535} y={402} s={5} c={PURPLE} r={38}>Shrasthi Sahan</T>
            <T x={535} y={407} s={3} c={VIOLET} r={45}>Ashish Dubey</T>
          </Plot>
        </div>
        <VLine className="ml-[2px] mr-[4px] mt-[28px] h-[45px]" />
        <div className="w-[75px]">
          <Title className="h-[16px] pt-[9px]"># Activities by State</Title>
          <Plot x={623} y={378} w={75} h={87}>
            <T x={625} y={418} r={-90} s={3} c="#333">State</T>
            <BarList
              x={649}
              labelX={631}
              axis={[["0", 649], ["100", 671]]}
              rows={[["Mahaw...", "165", 686], ["Kerala", "52", 660], ["Karnataka", "48", 659], ["Telangana", "41", 658], ["Tamilnadu", "36", 657], ["Andhra ...", "24", 654], ["Delhi", "16", 652.5], ["Bihar", "12", 652], ["West Be...", "6", 650.5]]}
            />
            <T x={670} y={456} a="middle" s={2.8} c="#333"># Activities</T>
            <B x={696} y={381} x2={698} y2={415} c="#c4c4c4" />
          </Plot>
        </div>
        <div className="ml-[2px] w-[90px]">
          <Title className="h-[16px] pt-[9px]"># Activities by Location</Title>
          <Plot x={700} y={378} w={90} h={87}>
            <L d="M704.5 390 V435" c="#d4d4d4" />
            <T x={712} y={421} r={-90} s={3} c="#333">Location</T>
            <BarList
              x={736}
              labelX={718}
              axis={[["0", 736], ["50", 763]]}
              rows={[["Mumbai...", "78", 779], ["Mumbai...", "39", 757], ["Bengalur...", "20", 747], ["Cochin ...", "19", 746], ["Hyderab...", "18", 746], ["Bengalur...", "14", 743], ["Visag_Sa...", "14", 743], ["Warang...", "14", 743], ["Chennai...", "13", 743]]}
            />
            <T x={757} y={456} a="middle" s={2.8} c="#333"># Activities</T>
            <B x={786} y={381} x2={788} y2={388} c="#c4c4c4" />
          </Plot>
        </div>
      </div>
    </Panel>
  )
}

export default function App() {
  return (
    <div className="grid h-[466px] w-[806px] grid-cols-[403px_403px] grid-rows-[235px_231px] overflow-hidden bg-[#f1f1f1] [font-family:'Liberation_Sans',Arial,sans-serif] blur-[0.3px]">
      <div className="flex bg-white">
        <KeywordsReport />
        <FiltersStrip />
      </div>
      <div className="flex bg-white">
        <NewUserReport />
        <FiltersStrip />
      </div>
      <div className="flex bg-white">
        <FeedbackReport />
        <FiltersStrip />
      </div>
      <div className="flex bg-white">
        <UsageReport />
        <FiltersStrip />
      </div>
    </div>
  )
}
